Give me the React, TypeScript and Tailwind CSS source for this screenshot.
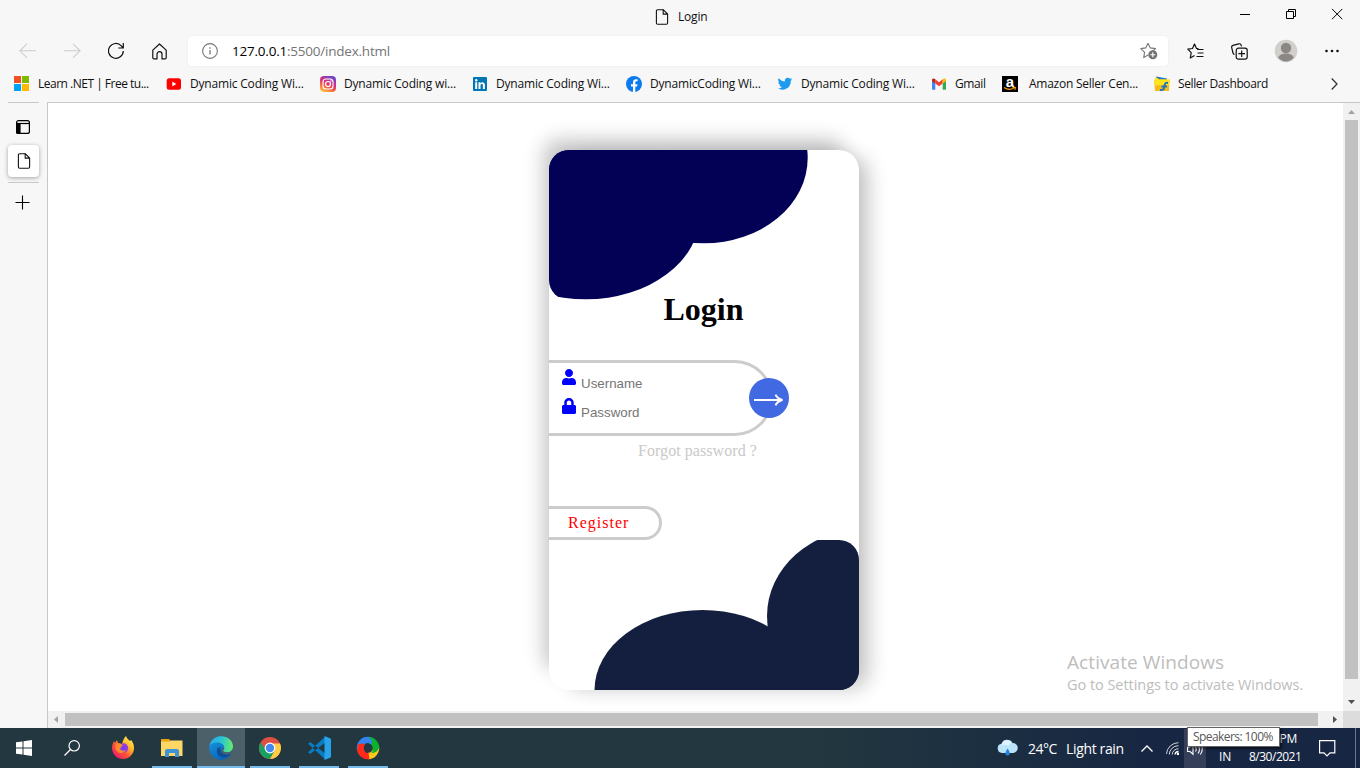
import React from "react";
import { FaUser, FaLock } from "react-icons/fa";

const ui = "font-['Open_Sans','Noto_Sans',sans-serif]";

function PageIcon() {
  return (
    <svg className="block" width="14" height="16" viewBox="0 0 14 16" fill="none" stroke="#111" strokeWidth="1.1">
      <path d="M8.200.7H2.600a1.200 1.200 0 0 0-1.200 1.200v12.200a1.200 1.200 0 0 0 1.200 1.200h8.800a1.200 1.200 0 0 0 1.200-1.200V5.100L8.200.7v4.400h4.400" />
    </svg>
  );
}

function TitleBar() {
  return (
    <div className="flex h-8 shrink-0 items-center">
      <div className="flex items-center pt-px pl-[655px]">
        <PageIcon />
        <span className="ml-[9px] w-[40px] text-[12px] leading-4 tracking-[-0.2px] text-[#111]">Login</span>
      </div>
      <svg className="ml-auto mr-[17px] mb-[4px]" width="103" height="12" viewBox="0 0 103 12" fill="none" stroke="#000" strokeWidth="1">
        <path d="M0 6.500h10M46.500 3.500h7v7h-7zM48.500 3.500v-2h7v7h-2M92 .9l10.300 10.300M102.300.9 92 11.200" />
      </svg>
    </div>
  );
}

function Toolbar() {
  return (
    <div className="flex h-[38px] shrink-0 items-center pl-[19px]">
      <svg width="18" height="16" viewBox="0 0 18 16" fill="none" stroke="#ccc" strokeWidth="1.1">
        <path d="M8 .8.9 7.800 8 14.800M1 7.800h16" />
      </svg>
      <svg className="ml-[26px]" width="18" height="16" viewBox="0 0 18 16" fill="none" stroke="#ccc" strokeWidth="1.1">
        <path d="m10 .8 7.100 7-7.100 7M17 7.800H1" />
      </svg>
      <svg className="ml-[27px]" width="16" height="18" viewBox="0 0 16 18" fill="none" stroke="#111" strokeWidth="1.2">
        <path d="M15.300 9a7.400 7.400 0 1 1-2-5.200L15.200 6M15.300 1v5h-5" />
      </svg>
      <svg className="ml-[28px]" width="15" height="17" viewBox="0 0 15 17" fill="none" stroke="#111" strokeWidth="1.2" strokeLinejoin="round">
        <path d="M.8 7.100 7.500 1l6.700 6.100v7.700q0 1.100-1.100 1.100H10v-4.700a2.500 2.500 0 0 0-5 0v4.700H1.900Q.8 15.900.8 14.800z" />
      </svg>
      <div className="ml-[21px] flex h-[30px] w-[980px] items-center rounded bg-white pl-[14px] shadow-[0_0_2px_rgba(0,0,0,0.08)]">
        <svg width="16" height="16" viewBox="0 0 16 16" fill="none" stroke="#777" strokeWidth="1.1">
          <circle cx="8" cy="8" r="7.400" />
          <path d="M8 7v4.500M8 4.300v1.400" strokeWidth="1.3" />
        </svg>
        <span className="ml-[14px] text-[13.5px] leading-5 tracking-[-0.22px] text-[#757575]">
          <span className="text-black">127.0.0.1</span>:5500/index.html
        </span>
        <svg className="ml-auto mr-[10px]" width="18" height="18" viewBox="0 0 18 18" fill="none">
          <path d="m8 1.200 2.300 4.700 5.200.7-3.800 3.600M8 1.200 5.700 5.900.8 6.600l3.800 3.700-.9 5.300L8 13" stroke="#777" strokeWidth="1.1" strokeLinejoin="round" />
          <circle cx="12.800" cy="12.800" r="4.500" fill="#717171" />
          <path d="M10.300 12.800h5M12.800 10.300v5" stroke="#fff" strokeWidth="1.1" />
        </svg>
      </div>
      <svg className="ml-[19px]" width="17" height="17" viewBox="0 0 17 17" fill="none" stroke="#111" strokeWidth="1.2" strokeLinejoin="round">
        <path d="M11.500 5.700 9.500 5.400 7.500 1 5.500 5.500.8 6.200l3.400 3.500-.9 5.300 4.200-2.400M10 6.500h6.500M10.500 10h6M9.500 13.500h7" />
      </svg>
      <svg className="ml-[27px]" width="17" height="17" viewBox="0 0 17 17" fill="none" stroke="#111" strokeWidth="1.2">
        <path d="M3.500 11.500A2 2 0 0 1 2 10L.7 4.600A1.900 1.900 0 0 1 2 2.300L7.800.8a2 2 0 0 1 2.400 1.500l.3 1" />
        <rect x="5.200" y="5.200" width="11" height="11" rx="2.200" />
        <path d="M10.700 7.400v6.600M7.400 10.700H14" />
      </svg>
      <svg className="ml-[26px]" width="24" height="24" viewBox="0 0 24 24">
        <circle cx="12" cy="12" r="11.300" fill="#d1cfcc" />
        <circle cx="12" cy="9" r="5.200" fill="#8b8784" />
        <path d="M4.200 18.500c1-2.800 4-4 7.800-4s6.800 1.200 7.800 4A11 11 0 0 1 12 22.500a11 11 0 0 1-7.800-4z" fill="#8b8784" />
      </svg>
      <svg className="ml-[26px]" width="16" height="4" viewBox="0 0 16 4" fill="#111">
        <circle cx="2.500" cy="2" r="1.300" /><circle cx="8" cy="2" r="1.300" /><circle cx="13.500" cy="2" r="1.300" />
      </svg>
    </div>
  );
}

function Mark({ icon, label, width, gap = "pl-[8px]", track = "tracking-[-0.19px]" }: { icon: React.ReactNode; label: string; width: string; gap?: string; track?: string }) {
  return (
    <div className={"flex shrink-0 items-center " + width}>
      {icon}
      <span className={"whitespace-nowrap text-[12px] leading-4 text-[#111] " + gap + " " + track}>{label}</span>
    </div>
  );
}

function Bookmarks() {
  return (
    <div className="flex h-[32px] shrink-0 items-center pb-[4px] pl-[14px]">
      <Mark width="w-[152px]" gap="pl-[9px]" track="tracking-[-0.5px]" label="Learn .NET | Free tu..." icon={
        <svg className="mb-px" width="15" height="15" viewBox="0 0 15 15"><path fill="#f25022" d="M0 0h7v7H0z" /><path fill="#7fba00" d="M8 0h7v7H8z" /><path fill="#00a4ef" d="M0 8h7v7H0z" /><path fill="#ffb900" d="M8 8h7v7H8z" /></svg>} />
      <Mark width="w-[154px]" label="Dynamic Coding Wi..." icon={
        <svg width="16" height="16" viewBox="0 0 16 16"><rect x=".7" y="2.300" width="14.300" height="11.500" rx="2.500" fill="#f00" /><path d="m6.300 5.500 4 2.500-4 2.500z" fill="#fff" /></svg>} />
      <Mark width="w-[152px]" label="Dynamic Coding wi..." icon={
        <svg width="16" height="16" viewBox="0 0 16 16">
          <defs><linearGradient id="ig" x1=".2" y1="1" x2=".7" y2="0"><stop stopColor="#fdc84b" /><stop offset=".3" stopColor="#fa6a3a" /><stop offset=".6" stopColor="#d62f80" /><stop offset="1" stopColor="#6a45cb" /></linearGradient></defs>
          <rect width="16" height="16" rx="4" fill="url(#ig)" /><rect x="3" y="3" width="10" height="10" rx="3" fill="none" stroke="#fff" strokeWidth="1.1" /><circle cx="8" cy="8" r="2.500" fill="none" stroke="#fff" strokeWidth="1.2" /><circle cx="11" cy="5" r=".7" fill="#fff" />
        </svg>} />
      <Mark width="w-[154px]" label="Dynamic Coding Wi..." icon={
        <svg width="16" height="16" viewBox="0 0 16 16"><rect x="1" y="1" width="14" height="14" rx="1" fill="#0077b5" /><circle cx="4.200" cy="4.200" r="1.200" fill="#fff" /><path d="M3.200 6.300h2V13h-2zM6.500 6.300h1.900v.9c1-1.700 4.500-1.500 4.500 1.600V13h-2V9.400c0-2-2.400-1.800-2.400.1V13h-2z" fill="#fff" /></svg>} />
      <Mark width="w-[151px]" label="DynamicCoding Wi..." icon={
        <svg width="16" height="16" viewBox="0 0 16 16"><circle cx="8" cy="8" r="8" fill="#0b7bed" /><path d="M7 16v-5.500H5V8.200h2V6.400c0-2.100 1.200-3.200 3-3.200l1.600.1v2h-1c-1 0-1.300.5-1.300 1.200v1.700h2.200l-.4 2.300H9.300V16z" fill="#fff" /></svg>} />
      <Mark width="w-[154px]" label="Dynamic Coding Wi..." icon={
        <svg width="16" height="16" viewBox="0 0 24 24" fill="#1d9bf0"><path d="M23 4.800a9 9 0 0 1-2.600.7 4.500 4.500 0 0 0 2-2.500 9 9 0 0 1-2.900 1.100 4.500 4.500 0 0 0-7.700 4.100A12.900 12.900 0 0 1 2.500 3.500a4.500 4.500 0 0 0 1.400 6 4.500 4.500 0 0 1-2-.6 4.500 4.500 0 0 0 3.600 4.500 4.500 4.500 0 0 1-2 .1 4.500 4.500 0 0 0 4.200 3.100A9 9 0 0 1 1 18.500 12.800 12.800 0 0 0 20.700 7 9 9 0 0 0 23 4.800z" /></svg>} />
      <Mark width="w-[71px]" track="tracking-[-0.4px]" label="Gmail" icon={
        <svg width="16" height="16" viewBox="0 0 16 16"><path fill="#4285f4" d="M1 4v8.700c0 .6.400 1 1 1h2.300V7z" /><path fill="#34a853" d="M15 4v8.700c0 .6-.4 1-1 1h-2.300V7z" /><path fill="#ea4335" d="m4.300 3.200 3.700 3 3.700-3v4.300L8 10.300 4.300 7.500z" /><path fill="#c5221f" d="M1 4.300c0-2 1.700-2.500 3.300-1.100v4.300L1 5.200z" /><path fill="#fbbc04" d="M15 4.300c0-2-1.700-2.500-3.300-1.100v4.300L15 5.200z" /></svg>} />
      <Mark width="w-[152px]" gap="pl-[11px]" track="tracking-[-0.25px]" label="Amazon Seller Cen..." icon={
        <span className="flex h-4 w-4 shrink-0 flex-col items-center bg-black">
          <span className="h-[11px] font-['Liberation_Sans',sans-serif] text-[15px] leading-[11px] font-bold text-white">a</span>
          <svg width="14" height="4" viewBox="0 0 14 4" fill="none" stroke="#f90" strokeWidth="1.2"><path d="M1 .5q5 3.500 10 .6M9.500.5h3l-.7 2.300" /></svg>
        </span>} />
      <Mark width="w-[140px]" track="tracking-[-0.38px]" label="Seller Dashboard" icon={
        <svg width="16" height="16" viewBox="0 0 16 16"><path fill="#2676c9" d="m2 .5 11 2V5H2z" /><path fill="#f6ba19" d="M2 1.300 5 4h10.500l-.5 11H1L.2 5z" /><path fill="#ffe519" d="m2 1.300 3 1.900h10.800L15.200 9 1 9.500.2 5z" /><path d="M14 7c-2.500-.7-3.300.5-3.700 3.500S9.500 14.300 6 14M7.500 10.500h5.500" fill="none" stroke="#1f74be" strokeWidth="1.9" /></svg>} />
      <svg className="ml-auto mr-[22px]" width="7" height="12" viewBox="0 0 7 12" fill="none" stroke="#333" strokeWidth="1.3"><path d="m.7.500 5.300 5.500L.7 11.500" /></svg>
    </div>
  );
}

function SideTabs() {
  return (
    <div className="flex w-[47px] shrink-0 flex-col pl-2">
      <div className="h-px w-[31px] bg-[#c8c8c8]" />
      <svg className="mt-[17px] ml-2" width="14" height="14" viewBox="0 0 14 14" fill="none" stroke="#000" strokeWidth="1.2">
        <rect x=".6" y=".6" width="12.800" height="12.800" rx="2" /><path d="M0 3.500h14" /><path d="M.5 3.500H4v10H2a1.500 1.500 0 0 1-1.500-1.500z" fill="#000" />
      </svg>
      <div className="mt-[11px] flex h-8 w-[31px] items-center justify-center rounded bg-white shadow-[0_1px_4px_rgba(0,0,0,0.35)]"><PageIcon /></div>
      <div className="mt-[5px] h-px w-[31px] bg-[#c8c8c8]" />
      <svg className="mt-[12px] ml-[7px]" width="15" height="15" viewBox="0 0 15 15" stroke="#000" strokeWidth="1.1"><path d="M7.500.5v14M.5 7.500h14" /></svg>
    </div>
  );
}

function LoginCard() {
  return (
    <div className="mt-[47px] ml-[501px] flex h-[540px] w-[310px] flex-col rounded-[20px] bg-white shadow-[-10px_-15px_20px_-5px_rgba(0,0,0,0.24),14px_3px_20px_-5px_rgba(0,0,0,0.24)]">
      <div className="h-[150px] shrink-0 overflow-hidden rounded-[20px]">
        <svg className="block" width="310" height="150" viewBox="0 0 310 150" fill="#030155">
          <path d="M0 0h258v8l-114 85L36 120 0 64z" />
          <ellipse cx="155" cy="8" rx="103.700" ry="85.300" />
          <ellipse cx="37" cy="64" rx="114" ry="85.300" />
        </svg>
      </div>
      <h1 className="-mt-[9px] h-[37px] pr-px text-center text-[32px] leading-[37px] font-bold text-black">Login</h1>
      <div className="relative mt-[32px] flex h-[76px] w-[224px] flex-col rounded-r-[38px] border-[3px] border-l-0 border-[#ccc] pt-[6px] pl-[13px]">
        <div className="flex h-[29px] items-start">
          <FaUser size={15} className="h-4 w-[14px] text-[#00f]" />
          <span className="mt-[7px] ml-[5px] font-['Liberation_Sans',sans-serif] text-[13.333px] leading-[16px] text-[#757575]">Username</span>
        </div>
        <div className="flex h-[29px] items-start">
          <FaLock size={15} className="h-4 w-[14px] text-[#00f]" />
          <span className="mt-[7px] ml-[5px] font-['Liberation_Sans',sans-serif] text-[13.333px] leading-[16px] text-[#757575]">Password</span>
        </div>
        <div className="absolute top-[15px] left-[200px] flex h-10 w-10 items-center justify-center rounded-full bg-[#4169e1]">
          <svg className="mt-[4px]" width="30" height="12" viewBox="0 0 30 12" fill="none" stroke="#fff" strokeWidth="2"><path d="M0 6h28" /><path d="M21.500.700 Q23.500 5 28.500 6 Q23.500 7 21.500 11.300" /></svg>
        </div>
      </div>
      <span className="mt-[6px] ml-[89px] text-[16px] leading-[18px] tracking-[0.06px] text-[#c9c9c9]">Forgot password ?</span>
      <div className="mt-[46px] flex h-[34px] w-[113px] items-center rounded-r-[17px] border-[3px] border-l-0 border-[#ccc] pl-[19px] text-[16px] leading-[18px] tracking-[1px] text-[#f00]">Register</div>
      <div className="h-[150px] shrink-0 overflow-hidden rounded-[20px]">
        <svg className="block" width="310" height="150" viewBox="0 0 310 150" fill="#141e3f">
          <ellipse cx="153.500" cy="150" rx="108" ry="80" />
          <ellipse cx="316" cy="76" rx="98" ry="87" />
          <path d="M219 86.500h91v64h-91z" />
        </svg>
      </div>
    </div>
  );
}

function Viewport() {
  return (
    <div className="flex min-w-0 flex-1 flex-col border-t border-l border-[#c8c8c8] bg-white">
      <div className="flex min-h-0 flex-1">
        <div className="relative min-w-0 flex-1 font-['Liberation_Serif',serif]">
          <LoginCard />
          <div className={"absolute top-[547px] left-[1019px] whitespace-nowrap text-[#bdbdbd] " + ui}>
            <p className="h-[24px] text-[19px] leading-[24px] tracking-[0.08px]">Activate Windows</p>
            <p className="h-[20px] text-[14.5px] leading-[21px] tracking-[-0.04px]">Go to Settings to activate Windows.</p>
          </div>
        </div>
        <div className="flex w-[17px] flex-col items-center bg-[#f1f1f1]">
          <svg className="mt-[7px] mb-[6px]" width="7" height="4" viewBox="0 0 7 4" fill="#a3a3a3"><path d="M0 4 3.500 0 7 4z" /></svg>
          <div className="h-[559px] w-[13px] bg-[#c1c1c1]" />
          <svg className="mt-[21px]" width="7" height="4" viewBox="0 0 7 4" fill="#505050"><path d="m0 0 3.500 4L7 0z" /></svg>
        </div>
      </div>
      <div className="flex h-[17px] shrink-0 items-center bg-[#f1f1f1]">
        <svg className="mr-[7px] ml-[6px]" width="4" height="7" viewBox="0 0 4 7" fill="#a3a3a3"><path d="M4 0 0 3.500 4 7z" /></svg>
        <div className="h-[13px] w-[1253px] bg-[#c1c1c1]" />
        <svg className="ml-[15px]" width="4" height="7" viewBox="0 0 4 7" fill="#505050"><path d="m0 0 4 3.500L0 7z" /></svg>
        <div className="ml-auto h-[17px] w-[17px] bg-[#dcdcdc]" />
      </div>
    </div>
  );
}

function App() {
  return (
    <div className={"flex h-[768px] w-[1360px] flex-col overflow-hidden bg-[#f7f7f7] " + ui}>
      <TitleBar />
      <Toolbar />
      <Bookmarks />
      <div className="flex min-h-0 flex-1"><SideTabs /><Viewport /></div>
      <Taskbar />
    </div>
  );
}

function AppSlot({ children, look }: { children: React.ReactNode; look: string }) {
  return <div className={"flex h-10 shrink-0 items-center justify-center " + look}>{children}</div>;
}

function Taskbar() {
  return (
    <div className="relative flex h-10 shrink-0 items-center bg-linear-to-r from-[#22373f] from-60% to-[#172643] to-85% text-white">
      <svg className="ml-4" width="16" height="16" viewBox="0 0 16 16" fill="#fff"><path d="m0 2.300 6.500-.9v6.100H0zM7.500 1.200 16 0v7.500H7.500zM0 8.500h6.500v6.100L0 13.700zM7.500 8.500H16V16l-8.500-1.200z" /></svg>
      <svg className="ml-8" width="16" height="16" viewBox="0 0 16 16" fill="none" stroke="#fff" strokeWidth="1.2"><circle cx="10.200" cy="5.800" r="5.200" /><path d="M6.500 9.500.5 15.500" /></svg>
      <svg className="ml-[31px]" width="24" height="24" viewBox="0 0 24 24">
        <defs>
          <linearGradient id="ff" x1=".9" y1=".1" x2=".2" y2=".9"><stop stopColor="#fff44f" /><stop offset=".35" stopColor="#ffb52b" /><stop offset=".65" stopColor="#ff5634" /><stop offset="1" stopColor="#f02068" /></linearGradient>
          <radialGradient id="fp"><stop stopColor="#6b43e8" /><stop offset="1" stopColor="#a03be0" /></radialGradient>
        </defs>
        <path fill="url(#ff)" d="M1 12c0-3 1-5 2-7l1 2 2-3 1 3 4 1c1-4 2-6 4-8 1 3 3 4 4 5l1-1c2 2 3 5 3 8a11 11 0 0 1-22 0z" />
        <circle cx="12.500" cy="12" r="4.700" fill="url(#fp)" />
        <path d="M5 8c3-1 5 0 7 1l-2 2-1 2c1 2 4 2 6 1-2 4-8 4-10 0-1-2-1-4 0-6z" fill="#ff8a2b" />
      </svg>
      <AppSlot look="ml-[17px] w-10 border-b-2 border-[#76b9ed] pt-[2px]">
        <svg width="22" height="20" viewBox="0 0 22 20"><path fill="#e8a412" d="M0 1h8l2 2v3H0z" /><path fill="#ffd766" d="M0 3.500h9l1-1h11.500V18H0z" /><path fill="#3f92d6" d="M4 13q0-2 2-2h10q2 0 2 2v6h-4v-4H8v4H4z" /></svg>
      </AppSlot>
      <AppSlot look="ml-[5px] w-12 border-b-2 border-[#76b9ed] bg-[#4c6069] pt-[1px]">
        <svg width="24" height="24" viewBox="0 0 24 24">
          <defs>
            <linearGradient id="ea" x1="0" y1=".3" x2="1" y2=".4"><stop stopColor="#2ba9e8" /><stop offset=".5" stopColor="#2bc3d2" /><stop offset="1" stopColor="#66eb6e" /></linearGradient>
            <linearGradient id="eb" x1="0" y1="0" x2=".6" y2="1"><stop stopColor="#199ae0" /><stop offset="1" stopColor="#0665bc" /></linearGradient>
          </defs>
          <circle cx="12" cy="12" r="11.800" fill="url(#eb)" />
          <path fill="#104f95" d="M8.500 12c-2 5 1 9.500 6 9.500 3 0 6-1.500 8-4-2 1-4 1.300-6.500.5C12 17 10.500 14 12 11z" />
          <path fill="url(#ea)" d="M.4 10C1.700 4 6.500.2 12 .2 19 .2 24 5 24 10.500c0 3.500-2.600 5.800-6 5.800-2.800 0-4-1-4-1.600s1.200-1.100 1.200-3C15.200 9 12.500 6.500 8.500 6.500 4.500 6.500 1.500 8 .4 10z" />
          <path d="M15.200 12c0 1.700-1.200 2.200-1.200 2.800 0 1 2.500 2 5 1.500 2-.2 3.500-1.200 4.500-2.500l.5 3-1.500.8c-6 2.500-11.500-.5-10-4.100.5-.9 1.500-1.500 2.700-1.500z" fill="#4c6069" />
        </svg>
      </AppSlot>
      <AppSlot look="ml-[5px] w-10 border-b-2 border-[#76b9ed] pt-[1px]">
        <svg width="22" height="22" viewBox="0 0 22 22"><circle cx="11" cy="11" r="11" fill="#dd4f43" /><path fill="#1aa15f" d="M1.500 5.500A11 11 0 0 0 11 22l5-8.500-9-.5z" /><path fill="#ffcd41" d="M21 6.500A11 11 0 0 1 11 22l5-9-3-6.500z" /><circle cx="11" cy="11" r="5.400" fill="#fff" /><circle cx="11" cy="11" r="4.200" fill="#4688f1" /></svg>
      </AppSlot>
      <AppSlot look="ml-[9px] w-10 border-b-2 border-[#76b9ed] pt-[1px]">
        <svg width="24" height="24" viewBox="0 0 24 24"><path d="M1 7.800 3.200 6 18 17.300v6zM1 16.200 3.200 18 18 6.700v-6z" fill="#087cc5" /><path fill="#27a3ec" d="M17.500 0 24 2.800v18.400L17.500 24z" /></svg>
      </AppSlot>
      <AppSlot look="ml-[9px] w-10 border-b-2 border-[#76b9ed] pt-[1px]">
        <svg width="24" height="24" viewBox="0 0 24 24" fill="none" strokeWidth="6.300">
          <path d="M12 4a8 8 0 0 1 8 8" stroke="#12a92d" />
          <path d="M20 11a8 8 0 0 1-8 9" stroke="#ffc91c" />
          <path d="M13 20a8 8 0 0 1-9-8" stroke="#ff2a1c" />
          <path d="M4 13a8 8 0 0 1 9-9" stroke="#3482ee" />
          <path stroke="none" fill="#09b32c" d="M12 .9c6 0 11 5 11 11-1 3-4 5-7.500 5 2-2 2.300-6-.5-8.500C16 5 15 2 12 .9z" />
          <path stroke="none" fill="#ff2a1c" d="M1.500 9C4 7 7 7 9 8.500c-2 3-1.500 6 1 8-3 2-6 1-8.500-2z" />
          <path stroke="none" fill="#3482ee" d="M1.800 8.500C4 2 10-.5 14 2c2 1.500 2.300 4 1.500 6.500C12 5.500 7 6 1.800 8.500z" />
        </svg>
      </AppSlot>
      <svg className="ml-[609px]" width="21" height="18" viewBox="0 0 21 18"><path fill="#b9e4fa" d="M5 14a4.700 4.700 0 0 1-.5-9.300A6 6 0 0 1 15.500 4a5 5 0 0 1 .5 10z" /><path fill="#e0f4ff" d="M5 5a5.500 5.500 0 0 1 10-1c-2 0-3 1-3.500 3C9 5 7 5 5 7z" /><path fill="#2686dd" d="M10.500 9.500q2.500 3.500 2.300 4.800a2.300 2.300 0 0 1-4.600 0Q8.200 13 10.500 9.500z" /></svg>
      <span className="ml-[10px] mt-[2px] w-[38px] whitespace-nowrap text-[14px] leading-5 tracking-[-0.5px]">24°C</span>
      <span className="mt-[2px] w-[75px] whitespace-nowrap text-[14px] leading-5 tracking-[-0.35px]">Light rain</span>
      <svg width="12" height="7" viewBox="0 0 12 7" fill="none" stroke="#fff" strokeWidth="1.3"><path d="m.5 6.500 5.500-5.500 5.500 5.500" /></svg>
      <svg className="ml-[13px]" width="13" height="13" viewBox="0 0 13 13" fill="none" stroke="#fff" strokeWidth="1"><path d="M.5 12A12 12 0 0 1 12.500.7M3.300 12.500A9 9 0 0 1 12.500 3.700M6.200 12.500a6 6 0 0 1 6.300-5.700" opacity=".8" /><path d="M9 12.500a3.500 3.500 0 0 1 3.500-3M11.500 11.500h1v1h-1z" strokeWidth="1.3" /></svg>
      <div className="ml-[5px] flex h-[39px] w-[22px] items-center justify-center bg-[#353f59]">
        <svg className="mt-[2px]" width="16" height="14" viewBox="0 0 16 14" fill="none" stroke="#fff" strokeWidth="1.1"><path d="M.6 5v4.500H3l3 2.700V2.300L3 5zM8.500 5q1.500 2.300 0 4.500M11 3q3 4.200 0 8.500M13.300 1.500q4 5.500 0 11" /></svg>
      </div>
      <div className="ml-[13px] flex h-10 w-[14px] flex-col pt-[21px] text-[12px] leading-4 tracking-[-0.2px]">IN</div>
      <div className="ml-[16px] flex h-10 w-[54px] flex-col whitespace-nowrap pt-[2px] text-[12px] leading-[18px] tracking-[-0.5px]">
        <span className="self-end pr-[6px] tracking-[-0.2px]">PM</span><span>8/30/2021</span>
      </div>
      <svg className="ml-[16px]" width="17" height="17" viewBox="0 0 17 17" fill="none" stroke="#fff" strokeWidth="1.2"><path d="M.6.600h15.200v12.200H11l-3 3-3-3H.6z" /></svg>
      <div className="ml-auto mr-[4px] h-10 w-px bg-[#6b7589]" />
      <div className="absolute top-[-1px] left-[1187px] flex h-[20px] w-[93px] items-center whitespace-nowrap border border-[#646464] bg-white pl-[5px] text-[12px] leading-4 tracking-[-0.57px] text-[#575757] shadow-[2px_2px_2px_rgba(0,0,0,0.5)]">Speakers: 100%</div>
    </div>
  );
}

export default App;
